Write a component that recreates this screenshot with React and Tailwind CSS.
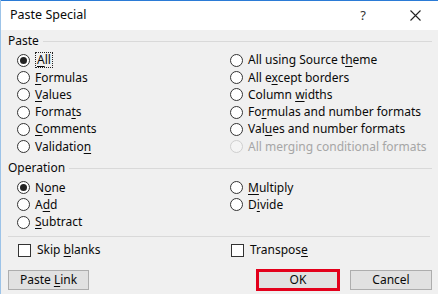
import React from "react";

const F = { fontFamily: '"Noto Sans", "Open Sans", Arial, sans-serif' };

// Label with one underlined access key
function Lbl({ text, k, disabled }) {
  const i = k == null ? -1 : k;
  return (
    <span className={disabled ? "text-[#a6a6a6]" : "text-[#0a0a0a]"}>
      {i < 0 ? text : (
        <>
          {text.slice(0, i)}
          <u className="underline-offset-[2px]">{text[i]}</u>
          {text.slice(i + 1)}
        </>
      )}
    </span>
  );
}

function Radio({ text, k, checked, disabled, focus }) {
  return (
    <div className="h-[17.3px] flex items-center">
      <span
        className={`w-[13px] h-[13px] rounded-full border flex items-center justify-center shrink-0 ${
          disabled ? "border-[#cfcfcf] bg-[#f4f4f4]" : "border-[#333] bg-white"
        }`}
      >
        {checked && <span className="w-[7px] h-[7px] rounded-full bg-[#222]" />}
      </span>
      <span className={`ml-[5px] leading-[14px] ${focus ? "border border-dotted border-[#222] px-[1px]" : ""}`}>
        <Lbl text={text} k={k} disabled={disabled} />
      </span>
    </div>
  );
}

function Check({ text, k }) {
  return (
    <div className="h-[17px] flex items-center">
      <span className="w-[13px] h-[13px] border border-[#333] bg-white shrink-0" />
      <span className="ml-[6px]">
        <Lbl text={text} k={k} />
      </span>
    </div>
  );
}

function GroupLabel({ children }) {
  return (
    <div className="h-[16px] flex items-center">
      <span className="text-[#0a0a0a]">{children}</span>
      <span className="flex-1 h-px bg-[#d9d9d9] ml-[4px]" />
    </div>
  );
}

export default function App() {
  const pasteLeft = [
    { text: "All", k: 0, checked: true, focus: true },
    { text: "Formulas", k: 0 },
    { text: "Values", k: 0 },
    { text: "Formats", k: 5 },
    { text: "Comments", k: 0 },
    { text: "Validation", k: 9 },
  ];
  const pasteRight = [
    { text: "All using Source theme", k: 18 },
    { text: "All except borders", k: 5 },
    { text: "Column widths", k: 7 },
    { text: "Formulas and number formats", k: 2 },
    { text: "Values and number formats", k: 3 },
    { text: "All merging conditional formats", disabled: true },
  ];

  return (
    <div
      className="w-[438px] h-[294px] overflow-hidden bg-[#f0f0f0] text-[12px] flex flex-col border-l border-[#9cc3e8]"
      style={F}
    >
      <div className="h-px bg-[#2b7bd6]" />
      {/* title bar */}
      <div className="h-[29px] bg-white flex items-center pl-[9px] pr-[16px]">
        <span className="text-[#0a0a0a] text-[12.5px]">Paste Special</span>
        <span className="ml-auto text-[#333] text-[13px] mr-[44px]">?</span>
        <svg width="11" height="11" viewBox="0 0 11 11" className="mr-[1px]">
          <path d="M0.5 0.5 L10.5 10.5 M10.5 0.5 L0.5 10.5" stroke="#222" strokeWidth="1.1" />
        </svg>
      </div>

      <div className="flex-1 flex flex-col pl-[7px] pr-[6px]">
        <div className="mt-[3px]">
          <GroupLabel>Paste</GroupLabel>
        </div>
        <div className="mt-[2.6px] grid grid-cols-[213px_1fr] pl-[9px]">
          <div className="flex flex-col">
            {pasteLeft.map((r) => (
              <Radio key={r.text} {...r} />
            ))}
          </div>
          <div className="flex flex-col">
            {pasteRight.map((r) => (
              <Radio key={r.text} {...r} />
            ))}
          </div>
        </div>

        <div className="mt-[5px]">
          <GroupLabel>Operation</GroupLabel>
        </div>
        <div className="mt-[2.6px] grid grid-cols-[213px_1fr] pl-[9px]">
          <div className="flex flex-col">
            <Radio text="None" k={1} checked />
            <Radio text="Add" k={1} />
            <Radio text="Subtract" k={0} />
          </div>
          <div className="flex flex-col">
            <Radio text="Multiply" k={0} />
            <Radio text="Divide" k={1} />
          </div>
        </div>

        <div className="mt-[5px] h-px bg-[#d9d9d9] mr-[2px]" />

        <div className="mt-[5px] grid grid-cols-[213px_1fr] pl-[10px]">
          <Check text="Skip blanks" k={5} />
          <Check text="Transpose" k={8} />
        </div>

        {/* buttons */}
        <div className="mt-[10px] flex items-center">
          <button className="w-[81px] h-[20px] bg-[#e1e1e1] border border-[#adadad] text-[#0a0a0a] leading-none">
            <Lbl text="Paste Link" k={6} />
          </button>
          <button className="ml-auto w-[84px] h-[22px] bg-[#e1e1e1] border-[3px] border-[#e3001b] text-[#0a0a0a] leading-none">
            OK
          </button>
          <button className="ml-[10px] w-[82px] h-[20px] bg-[#e1e1e1] border border-[#adadad] text-[#0a0a0a] leading-none">
            Cancel
          </button>
        </div>
      </div>
    </div>
  );
}
